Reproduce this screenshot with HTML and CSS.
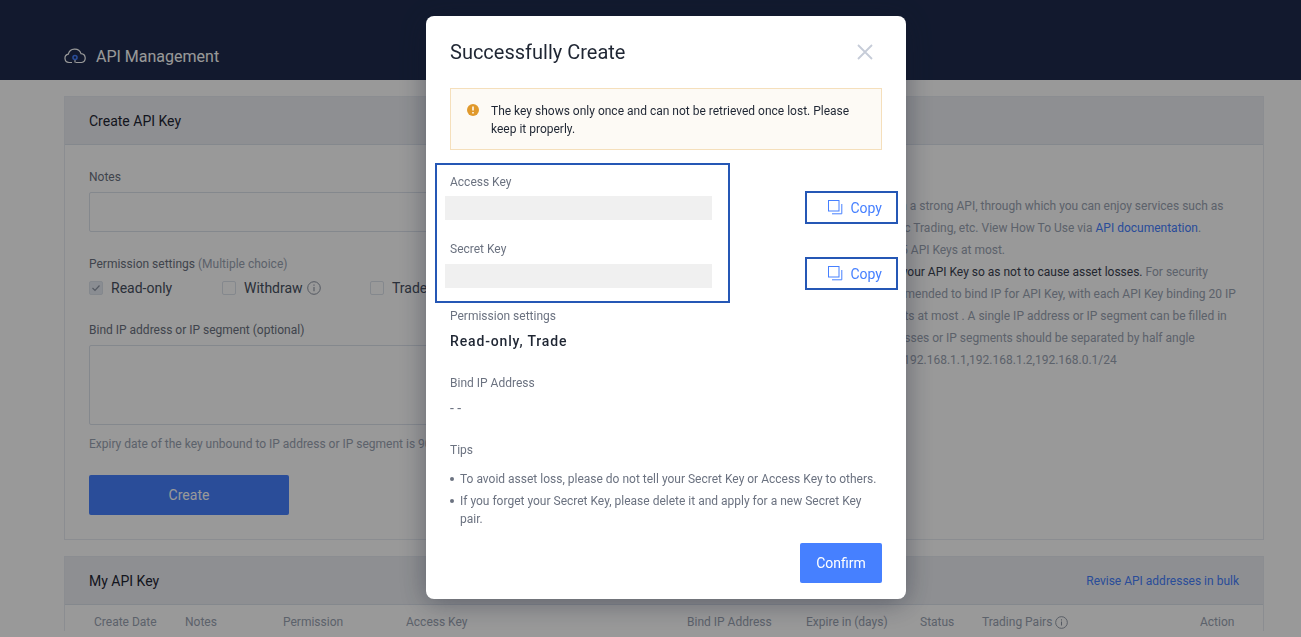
FILE: index.html
```html
<!DOCTYPE html>
<html lang="en">
<head>
    <meta charset="UTF-8">
    <meta name="viewport" content="width=device-width, initial-scale=1.0">
    <title>API Management</title>
    <link rel="stylesheet" href="styles.css">
</head>
<body>
    <header class="top-bar">
        <svg class="cloud-icon" viewBox="0 0 22 17" width="22" height="17" fill="none">
            <path d="M8 15.5H5a4.2 4.2 0 0 1-.7-8.3A6.6 6.6 0 0 1 17 6.6a4.5 4.5 0 0 1 .6 8.9H11.5" stroke="#fff" stroke-width="1.2"/>
            <path d="M11 12.5v3" stroke="#fff" stroke-width="1.2"/>
            <circle cx="11" cy="10.5" r="2" stroke="#4680ff" stroke-width="1.6"/>
        </svg>
        <span class="top-title">API Management</span>
    </header>

    <main class="content">
        <section class="panel">
            <div class="panel-head"><h3>Create API Key</h3></div>
            <div class="panel-body">
                <form class="create-form">
                    <label class="form-label">Notes</label>
                    <div class="text-input"></div>

                    <label class="form-label form-gap">Permission settings <span class="muted">(Multiple choice)</span></label>
                    <div class="check-row">
                        <span class="check-item check-read">
                            <i class="check-box is-checked">
                                <svg viewBox="0 0 12 12" width="12" height="12" fill="none">
                                    <path d="M2.5 6l2.5 2.5L9.5 3.5" stroke="#8d95a3" stroke-width="1.2"/>
                                </svg>
                            </i>Read-only
                        </span>
                        <span class="check-item check-withdraw"><i class="check-box"></i>Withdraw
                            <svg class="info-icon" viewBox="0 0 14 14" width="14" height="14" fill="none">
                                <circle cx="7" cy="7" r="6.3" stroke="#8d95a3"/>
                                <path d="M7 6v4.2M7 3.6v1.2" stroke="#8d95a3" stroke-width="1.1"/>
                            </svg>
                        </span>
                        <span class="check-item"><i class="check-box"></i>Trade</span>
                    </div>

                    <label class="form-label form-gap">Bind IP address or IP segment (optional)</label>
                    <div class="text-area"></div>
                    <p class="form-hint">Expiry date of the key unbound to IP address or IP segment is 90 days.</p>
                    <button type="button" class="create-btn">Create</button>
                </form>
                <div class="api-notes">
                    <p>Exchange provides you with a strong API, through which you can enjoy services such as</p>
                    <p>and market query, automatic Trading, etc. View How To Use via <a class="blue-link">API documentation</a>.</p>
                    <p>Every user can now create 5 API Keys at most.</p>
                    <p>Please do not ever expose <b>your API Key so as not to cause asset losses.</b> For security</p>
                    <p>reasons, it's strongly recommended to bind IP for API Key, with each API Key binding 20 IP</p>
                    <p>All addresses or IP segments at most . A single IP address or IP segment can be filled in</p>
                    <p>directly, with multiple addresses or IP segments should be separated by half angle</p>
                    <p>English commas, such as : 192.168.1.1,192.168.1.2,192.168.0.1/24</p>
                </div>
            </div>
        </section>

        <section class="panel panel-last">
            <div class="panel-head panel-head-split">
                <h3>My API Key</h3>
                <a class="blue-link">Revise API addresses in bulk</a>
            </div>
            <div class="key-table">
                <span>Create Date</span>
                <span>Notes</span>
                <span>Permission</span>
                <span>Access Key</span>
                <span>Bind IP Address</span>
                <span>Expire in (days)</span>
                <span>Status</span>
                <span class="with-icon">Trading Pairs
                    <svg viewBox="0 0 14 14" width="13" height="13" fill="none">
                        <circle cx="7" cy="7" r="6.3" stroke="#8d95a3"/>
                        <path d="M7 6v4.2M7 3.6v1.2" stroke="#8d95a3" stroke-width="1.1"/>
                    </svg>
                </span>
                <span>Action</span>
            </div>
        </section>
    </main>

    <div class="overlay">
        <div class="modal">
            <div class="modal-head">
                <h2>Successfully Create</h2>
                <svg class="close-icon" viewBox="0 0 16 16" width="16" height="16" fill="none">
                    <path d="M1 1l14 14M15 1L1 15" stroke="#c6ccd8" stroke-width="1.8"/>
                </svg>
            </div>

            <div class="alert">
                <svg class="alert-icon" viewBox="0 0 12 12" width="12" height="12">
                    <circle cx="6" cy="6" r="6" fill="#e0992c"/>
                    <path d="M6 2.6v4M6 8v1.4" stroke="#fff" stroke-width="1.5"/>
                </svg>
                <p>The key shows only once and can not be retrieved once lost. Please keep it properly.</p>
            </div>

            <div class="keys">
                <div class="key-frame"></div>
                <div class="field-label">Access Key</div>
                <div class="key-row">
                    <div class="key-box"></div>
                    <button type="button" class="copy-btn">
                        <svg viewBox="0 0 15 15" width="15" height="15" fill="none">
                            <rect x="0.5" y="0.5" width="10.5" height="10.5" stroke="#4680ff"/>
                            <path d="M13.8 4v9.8H4" stroke="#4680ff"/>
                        </svg>
                        Copy
                    </button>
                </div>
                <div class="field-label">Secret Key</div>
                <div class="key-row key-row-second">
                    <div class="key-box"></div>
                    <button type="button" class="copy-btn">
                        <svg viewBox="0 0 15 15" width="15" height="15" fill="none">
                            <rect x="0.5" y="0.5" width="10.5" height="10.5" stroke="#4680ff"/>
                            <path d="M13.8 4v9.8H4" stroke="#4680ff"/>
                        </svg>
                        Copy
                    </button>
                </div>
            </div>

            <div class="field-label">Permission settings</div>
            <div class="field-value strong">Read-only, Trade</div>

            <div class="field-label">Bind IP Address</div>
            <div class="field-value">- -</div>

            <div class="field-label">Tips</div>
            <ul class="tips">
                <li>To avoid asset loss, please do not tell your Secret Key or Access Key to others.</li>
                <li>If you forget your Secret Key, please delete it and apply for a new Secret Key pair.</li>
            </ul>

            <div class="modal-foot">
                <button type="button" class="confirm-btn">Confirm</button>
            </div>
        </div>
    </div>
</body>
</html>
```

FILE: styles.css
```css
/* page under the dialog */
html, body {
    height: 100%;
    overflow: hidden;
}

body {
    margin: 0;
    font-family: Roboto, 'Liberation Sans', sans-serif;
    font-size: 12px;
    line-height: 18px;
    background-color: #fff;
    color: #6b7280;
}

.top-bar {
    height: 80px;
    box-sizing: border-box;
    padding: 34px 0 0 64px;
    display: flex;
    align-items: center;
    background-color: #1e2b4d;
}

.cloud-icon {
    margin: 0 10px 4px 0;
}

.top-title {
    font-size: 16px;
    line-height: 24px;
    color: #fff;
}

.content {
    width: 1200px;
    margin-left: 64px;
    padding-top: 16px;
}

.panel {
    border: 1px solid #e8ecf2;
    margin-bottom: 16px;
}

.panel-last {
    margin-bottom: 0;
    border-bottom: none;
}

.panel-head {
    height: 48px;
    box-sizing: border-box;
    padding-left: 24px;
    display: flex;
    align-items: center;
    background-color: #edeff3;
    border-bottom: 1px solid #dde3ec;
}

.panel-head h3 {
    margin: 0;
    font-size: 14px;
    font-weight: 400;
    color: #1f2633;
}

.panel-head-split {
    justify-content: space-between;
    padding-right: 24px;
}

.panel-body {
    display: flex;
    padding: 23px 24px 24px;
}

.create-form {
    width: 600px;
    flex-shrink: 0;
}

.form-label {
    display: block;
    color: #6b7280;
}

.form-gap {
    margin-top: 23px;
}

.muted {
    color: #9aa3b2;
}

.text-input {
    height: 38px;
    margin-top: 6px;
    border: 1px solid #dde3ec;
    border-radius: 2px;
}

.check-row {
    display: flex;
    height: 20px;
    margin-top: 5px;
    font-size: 14px;
    line-height: 20px;
    color: #475061;
}

.check-item {
    display: flex;
    align-items: center;
}

.check-read {
    width: 133px;
}

.check-withdraw {
    width: 148px;
}

.check-box {
    display: block;
    width: 12px;
    height: 12px;
    margin-right: 8px;
    border: 1px solid #dde3ec;
    border-radius: 2px;
}

.check-box svg {
    display: block;
}

.is-checked {
    background-color: #e6ebf3;
}

.info-icon {
    margin-left: 4px;
}

.text-area {
    height: 78px;
    margin-top: 6px;
    border: 1px solid #dde3ec;
    border-radius: 2px;
}

.form-hint {
    margin: 10px 0 22px;
    color: #9aa3b2;
    white-space: nowrap;
}

.create-btn {
    display: block;
    width: 200px;
    height: 40px;
    border: none;
    border-radius: 2px;
    background-color: #4680ff;
    color: #fff;
    font: 14px Roboto, sans-serif;
}

.api-notes {
    margin-left: 70px;
    padding-top: 27px;
    color: #9aa3b2;
    white-space: nowrap;
}

.api-notes p {
    margin: 0;
    line-height: 22px;
}

.api-notes b {
    font-weight: 400;
    color: #3a4150;
}

.blue-link {
    color: #4680ff;
}

.key-table {
    display: grid;
    grid-template-columns: 91px 98px 123px 281px 119px 114px 62px 218px 1fr;
    padding: 8px 0 0 29px;
    color: #9aa3b2;
}

.with-icon {
    display: flex;
    align-items: center;
    gap: 3px;
}

/* dialog */
.overlay {
    position: fixed;
    top: 0;
    left: 0;
    right: 0;
    bottom: 0;
    background-color: rgba(0, 0, 0, 0.4);
}

.modal {
    width: 480px;
    height: 583px;
    box-sizing: border-box;
    margin: 16px 0 0 426px;
    padding: 22px 24px 16px;
    background-color: #fff;
    border-radius: 8px;
    box-shadow: 0 4px 28px rgba(20, 26, 46, 0.4);
}

.modal-head {
    display: flex;
    justify-content: space-between;
    align-items: center;
    height: 28px;
}

.modal-head h2 {
    margin: 0;
    font-size: 20px;
    font-weight: 400;
    line-height: 28px;
    color: #1f2633;
}

.close-icon {
    margin-right: 9px;
}

.alert {
    display: flex;
    margin-top: 22px;
    padding: 13px 16px 11px;
    background-color: #fdfaf5;
    border: 1px solid #f5dfbb;
    color: #1f2633;
}

.alert p {
    margin: 0;
}

.alert-icon {
    flex-shrink: 0;
    margin: 2px 12px 0 0;
}

.keys {
    position: relative;
    margin-top: 23px;
}

.key-frame {
    position: absolute;
    top: -10px;
    left: -15px;
    width: 291px;
    height: 136px;
    border: 2px solid #2557b5;
}

.field-label {
    color: #6b7280;
    margin-bottom: 5px;
}

.field-value {
    height: 22px;
    font-size: 14px;
    line-height: 22px;
    margin-bottom: 22px;
    color: #6b7280;
}

.strong {
    font-weight: 500;
    letter-spacing: 0.85px;
    color: #1f2633;
}

.key-row {
    display: flex;
    align-items: center;
    justify-content: space-between;
    height: 24px;
    margin-bottom: 20px;
}

.key-box {
    width: 267px;
    height: 24px;
    margin-left: -5px;
    background-color: #f0f0f0;
}

.copy-btn {
    display: flex;
    align-items: center;
    justify-content: flex-end;
    gap: 7px;
    width: 93px;
    height: 33px;
    box-sizing: border-box;
    margin: 0 -16px 1px 0;
    padding: 0 14px 0 0;
    background: #fff;
    border: 2px solid #2557b5;
    color: #4680ff;
    font: 14px Roboto, sans-serif;
}

.key-row-second .key-box {
    margin-top: 2px;
}

.key-row-second .copy-btn {
    margin-bottom: 3px;
}

.tips {
    margin: 11px 0 0;
    padding: 0;
    list-style: none;
}

.tips li {
    position: relative;
    padding-left: 10px;
    margin-bottom: 4px;
}

.tips li::before {
    content: "";
    position: absolute;
    left: 0;
    top: 7px;
    width: 4px;
    height: 4px;
    border-radius: 50%;
    background-color: #6b7280;
}

.modal-foot {
    display: flex;
    justify-content: flex-end;
    margin-top: 15px;
}

.confirm-btn {
    width: 82px;
    height: 40px;
    border: none;
    border-radius: 2px;
    background-color: #4680ff;
    color: #fff;
    font: 14px Roboto, sans-serif;
}
```
